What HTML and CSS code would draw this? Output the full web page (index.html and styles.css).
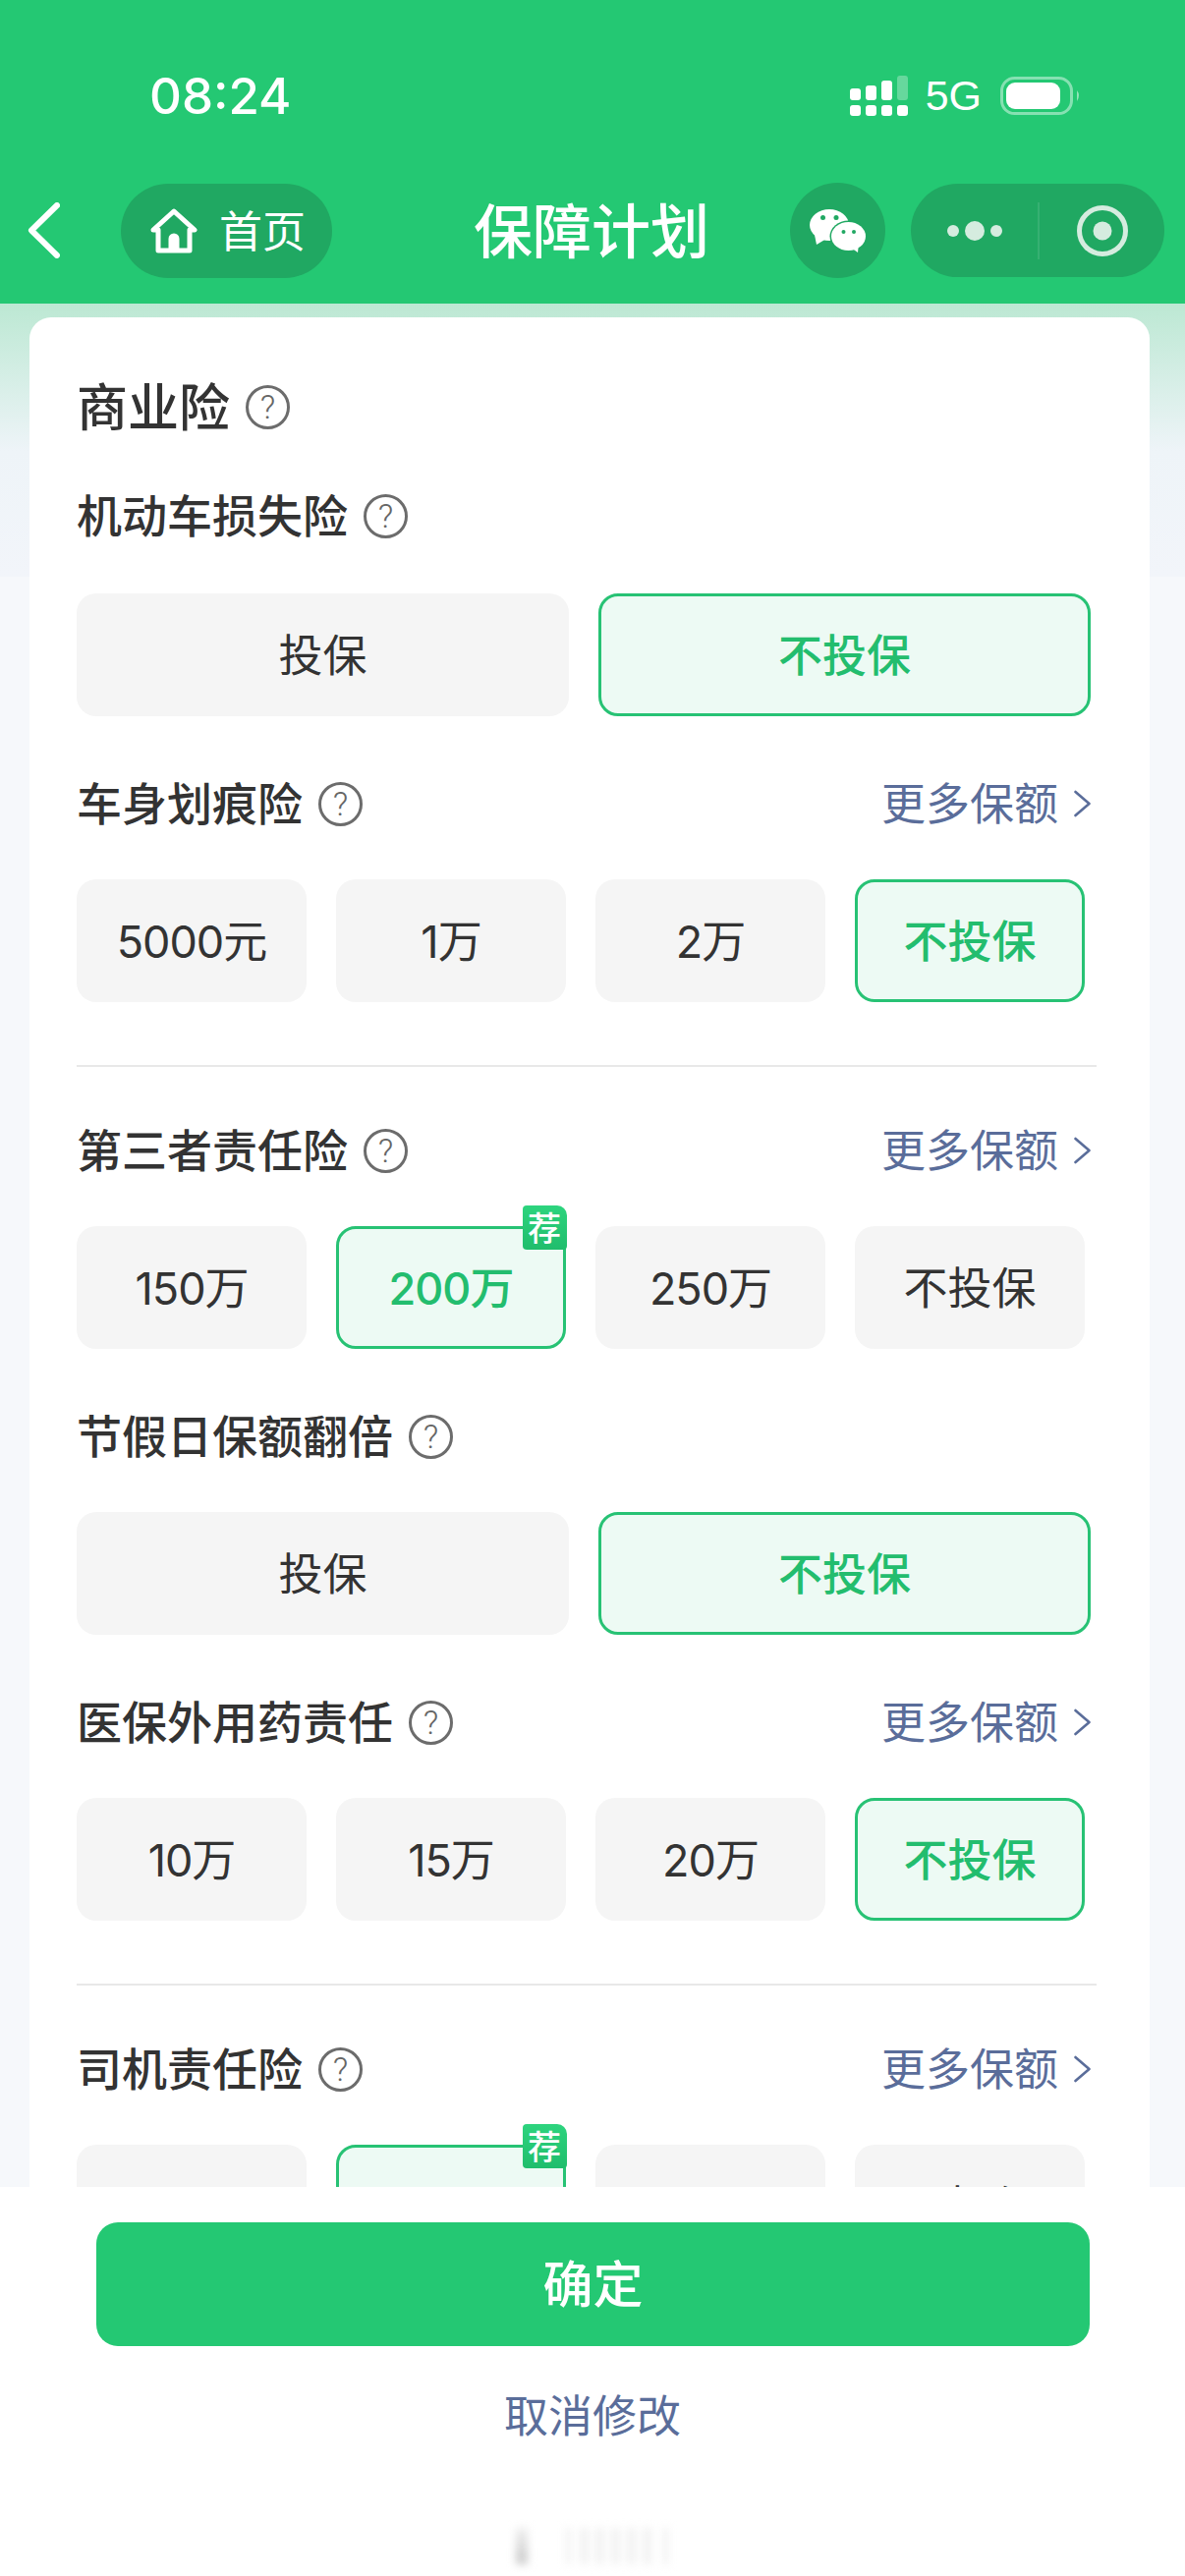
FILE: index.html
```html
<!DOCTYPE html>
<html lang="zh-CN">

<head>
    <meta charset="UTF-8">
    <meta name="viewport" content="width=device-width, initial-scale=1.0">
    <title>保障计划</title>
    <link rel="stylesheet" href="styles.css">
</head>

<body>
    <div class="page">
        <header class="header">
            <!-- Статус-бар -->
            <div class="status-bar">
                <span class="time">08:24</span>
                <div class="status-icons">
                    <svg class="signal" width="59" height="41" viewBox="0 0 59 41" fill="#fff">
                        <rect x="0" y="13" width="11" height="12" rx="3" />
                        <rect x="16" y="10" width="11" height="15" rx="3" />
                        <rect x="32" y="5" width="11" height="20" rx="3" />
                        <rect x="48" y="0" width="11" height="25" rx="3" opacity="0.3" />
                        <rect x="0" y="30" width="11" height="11" rx="3" />
                        <rect x="16" y="30" width="11" height="11" rx="3" />
                        <rect x="32" y="30" width="11" height="11" rx="3" />
                        <rect x="48" y="30" width="11" height="11" rx="3" />
                    </svg>
                    <span class="network">5G</span>
                    <svg class="battery" width="82" height="39" viewBox="0 0 82 39">
                        <rect x="1.5" y="1.5" width="71" height="36" rx="13" fill="none" stroke="#fff" stroke-opacity="0.45" stroke-width="3" />
                        <rect x="6" y="6" width="55" height="27" rx="9" fill="#fff" />
                        <path d="M78 14 q4 5 0 11z" fill="#fff" fill-opacity="0.5" />
                    </svg>
                </div>
            </div>
            <!-- Навигация -->
            <nav class="nav-bar">
                <svg class="back-icon" width="33" height="57" viewBox="0 0 33 57" fill="none" stroke="#fff" stroke-width="6" stroke-linecap="round" stroke-linejoin="round">
                    <path d="M30 3 L4 28.5 L30 54" />
                </svg>
                <div class="home-pill">
                    <svg width="48" height="46" viewBox="0 0 48 46" fill="none" stroke="#fff" stroke-width="5" stroke-linejoin="round">
                        <path d="M3 22 L24 3 L45 22 L40 22 L40 43 L8 43 L8 22 Z" />
                        <path d="M18.5 43 V31 a5.5 5.5 0 0 1 11 0 V43 Z" fill="#fff" stroke="none" />
                    </svg>
                    <span>首页</span>
                </div>
                <h1 class="nav-title">保障计划</h1>
                <div class="wechat-btn">
                    <svg width="58" height="46" viewBox="0 0 58 46">
                        <ellipse cx="20" cy="17" rx="20" ry="16" fill="#fff" />
                        <path d="M5 27 L7 37 L17 31 Z" fill="#fff" />
                        <circle cx="13.5" cy="9.5" r="2.5" fill="#20a862" />
                        <circle cx="27" cy="9.5" r="2.5" fill="#20a862" />
                        <ellipse cx="39.5" cy="28.5" rx="19" ry="16" fill="#20a862" />
                        <ellipse cx="39.5" cy="28.5" rx="17.5" ry="14.5" fill="#fff" />
                        <path d="M42 40 L49 45 L50 35 Z" fill="#fff" />
                        <circle cx="34.5" cy="24" r="2" fill="#20a862" />
                        <circle cx="45" cy="24" r="2" fill="#20a862" />
                    </svg>
                </div>
                <div class="capsule">
                    <div class="capsule-part">
                        <svg width="56" height="22" viewBox="0 0 56 22" fill="#d5ecdf">
                            <circle cx="6" cy="11" r="6" />
                            <circle cx="28" cy="11" r="10" />
                            <circle cx="50" cy="11" r="6" />
                        </svg>
                    </div>
                    <div class="capsule-part capsule-target">
                        <svg width="52" height="52" viewBox="0 0 52 52">
                            <circle cx="26" cy="26" r="23.5" fill="none" stroke="#d5ecdf" stroke-width="5" />
                            <circle cx="26" cy="26" r="9.5" fill="#d5ecdf" />
                        </svg>
                    </div>
                </div>
            </nav>
        </header>

        <main class="content">
            <div class="card">
                <div class="card-head">
                    <h2 class="card-title">商业险</h2>
                    <span class="help">?</span>
                </div>

                <section class="block">
                    <div class="block-head">
                        <h3>机动车损失险</h3><span class="help">?</span>
                    </div>
                    <div class="options two">
                        <div class="option">投保</div>
                        <div class="option active">不投保</div>
                    </div>
                </section>

                <section class="block">
                    <div class="block-head">
                        <h3>车身划痕险</h3><span class="help">?</span>
                        <a class="more">更多保额<svg width="17" height="28" viewBox="0 0 17 28" fill="none" stroke="#5a6d9a" stroke-width="2.6" stroke-linecap="round" stroke-linejoin="round"><path d="M1.5 2 L15.5 14 L1.5 26" /></svg></a>
                    </div>
                    <div class="options">
                        <div class="option num">5000元</div>
                        <div class="option num">1万</div>
                        <div class="option num">2万</div>
                        <div class="option active">不投保</div>
                    </div>
                </section>

                <hr class="divider">

                <section class="block">
                    <div class="block-head">
                        <h3>第三者责任险</h3><span class="help">?</span>
                        <a class="more">更多保额<svg width="17" height="28" viewBox="0 0 17 28" fill="none" stroke="#5a6d9a" stroke-width="2.6" stroke-linecap="round" stroke-linejoin="round"><path d="M1.5 2 L15.5 14 L1.5 26" /></svg></a>
                    </div>
                    <div class="options">
                        <div class="option num">150万</div>
                        <div class="option num active">200万<span class="tag">荐</span></div>
                        <div class="option num">250万</div>
                        <div class="option">不投保</div>
                    </div>
                </section>

                <section class="block">
                    <div class="block-head">
                        <h3>节假日保额翻倍</h3><span class="help">?</span>
                    </div>
                    <div class="options two">
                        <div class="option">投保</div>
                        <div class="option active">不投保</div>
                    </div>
                </section>

                <section class="block">
                    <div class="block-head">
                        <h3>医保外用药责任</h3><span class="help">?</span>
                        <a class="more">更多保额<svg width="17" height="28" viewBox="0 0 17 28" fill="none" stroke="#5a6d9a" stroke-width="2.6" stroke-linecap="round" stroke-linejoin="round"><path d="M1.5 2 L15.5 14 L1.5 26" /></svg></a>
                    </div>
                    <div class="options">
                        <div class="option num">10万</div>
                        <div class="option num">15万</div>
                        <div class="option num">20万</div>
                        <div class="option active">不投保</div>
                    </div>
                </section>

                <hr class="divider">

                <section class="block">
                    <div class="block-head">
                        <h3>司机责任险</h3><span class="help">?</span>
                        <a class="more">更多保额<svg width="17" height="28" viewBox="0 0 17 28" fill="none" stroke="#5a6d9a" stroke-width="2.6" stroke-linecap="round" stroke-linejoin="round"><path d="M1.5 2 L15.5 14 L1.5 26" /></svg></a>
                    </div>
                    <div class="options">
                        <div class="option"></div>
                        <div class="option active"><span class="tag">荐</span></div>
                        <div class="option"></div>
                        <div class="option">不投保</div>
                    </div>
                </section>
            </div>
        </main>

        <footer class="footer">
            <button class="confirm-btn">确定</button>
            <a class="cancel-link">取消修改</a>
            <div class="home-bar">
                <i></i><i></i><i></i><i></i><i></i><i></i><i></i><i></i>
            </div>
        </footer>
    </div>
</body>

</html>
```

FILE: styles.css
```css
* {
    box-sizing: border-box;
}

body {
    font-family: "Noto Sans CJK SC", Roboto, sans-serif;
    margin: 0;
    padding: 0;
    background-color: #fff;
    color: #333;
}

.page {
    display: flex;
    flex-direction: column;
    height: 100vh;
    overflow: hidden;
}

/* Шапка */
.header {
    height: 309px;
    flex-shrink: 0;
    background-color: #24c873;
    color: white;
}

.status-bar {
    height: 185px;
    display: flex;
    align-items: flex-start;
    justify-content: space-between;
    padding: 62px 106px 0 152px;
}

.time {
    font-family: Inter, sans-serif;
    font-size: 51px;
    font-weight: 500;
    line-height: 72px;
}

.status-icons {
    display: flex;
    align-items: center;
    height: 41px;
    margin-top: 15px;
}

.network {
    font-family: "Liberation Sans", sans-serif;
    font-size: 43px;
    line-height: 41px;
    margin: 0 19px 0 18px;
}

.nav-bar {
    height: 99px;
    display: flex;
    align-items: center;
    padding-left: 28px;
}

.back-icon {
    flex-shrink: 0;
}

.home-pill {
    width: 215px;
    height: 96px;
    margin-left: 62px;
    border-radius: 48px;
    background-color: #20a862;
    display: flex;
    align-items: center;
    padding-left: 30px;
    gap: 22px;
    font-size: 44px;
}

.home-pill span {
    padding-bottom: 4px;
}

.nav-title {
    margin: 0;
    width: 466px;
    padding: 0 0 6px 62px;
    text-align: center;
    font-size: 60px;
    font-weight: 500;
    white-space: nowrap;
}

.wechat-btn {
    width: 97px;
    height: 97px;
    border-radius: 50%;
    background-color: #20a862;
    display: flex;
    align-items: center;
    justify-content: center;
}

.capsule {
    width: 258px;
    height: 95px;
    margin-left: 26px;
    border-radius: 48px;
    background-color: #20a862;
    display: flex;
    align-items: center;
}

.capsule-part {
    width: 130px;
    height: 58px;
    display: flex;
    align-items: center;
    justify-content: center;
}

.capsule-target {
    border-left: 2px solid rgba(255, 255, 255, 0.1);
}

/* Контент */
.content {
    flex: 1;
    min-height: 0;
    overflow: hidden;
    padding: 14px 36px 0 30px;
    background: linear-gradient(#bce8d3, #eef4f8 150px, #f2f5fa 278px, #f6f8fb 278px);
}

.card {
    background-color: white;
    border-radius: 22px 22px 0 0;
    padding: 61px 60px 0 48px;
}

.card-head {
    display: flex;
    align-items: center;
    height: 60px;
    gap: 16px;
}

.card-title {
    margin: 0 0 6px;
    font-size: 52px;
    font-weight: 500;
}

.block {
    margin-top: 59px;
}

.card-head + .block {
    margin-top: 51px;
}

.card-head + .block .options {
    margin-top: 49px;
}

.block-head {
    display: flex;
    align-items: center;
    height: 60px;
    gap: 16px;
}

h3 {
    margin: 0 0 7px;
    font-size: 46px;
    font-weight: 500;
}

.help {
    width: 45px;
    height: 45px;
    flex-shrink: 0;
    border: 3px solid #6c6c6c;
    border-radius: 50%;
    color: #666;
    font-family: Roboto, sans-serif;
    font-size: 34px;
    font-weight: 300;
    line-height: 39px;
    text-align: center;
}

.more {
    margin-left: auto;
    display: flex;
    align-items: center;
    gap: 16px;
    color: #5a6d9a;
    font-size: 45px;
    line-height: 60px;
    padding-bottom: 5px;
}

.more svg {
    margin-top: 5px;
}

.options {
    display: grid;
    grid-template-columns: repeat(4, 234px);
    gap: 30px;
    margin-top: 47px;
}

.options.two {
    grid-template-columns: repeat(2, 501px);
}

.option {
    position: relative;
    height: 125px;
    padding-bottom: 5px;
    border-radius: 20px;
    background-color: #f5f5f5;
    display: flex;
    align-items: center;
    justify-content: center;
    font-family: Inter, "Noto Sans CJK SC", sans-serif;
    font-size: 45px;
}

.option.num {
    letter-spacing: -1px;
}

.option.active {
    background-color: #edfaf4;
    border: 3.5px solid #27c274;
    color: #23bd6e;
    font-weight: 500;
}

.tag {
    position: absolute;
    top: -24.5px;
    right: -3.5px;
    width: 45px;
    height: 45px;
    border-radius: 4px 10px 4px 4px;
    background: linear-gradient(#2dd47e, #20bd6c);
    color: white;
    font-family: "Noto Sans CJK SC", sans-serif;
    font-size: 34px;
    line-height: 44px;
    letter-spacing: 0;
    text-align: center;
}

.divider {
    border: none;
    border-top: 2px solid #e8e8e8;
    margin: 64px -6px 55px 0;
}

.divider + .block {
    margin-top: 0;
}

/* Низ страницы */
.footer {
    height: 396px;
    flex-shrink: 0;
    background-color: white;
    display: flex;
    flex-direction: column;
    align-items: center;
    padding-top: 36px;
}

.confirm-btn {
    width: 1011px;
    height: 126px;
    padding: 0 0 6px;
    border: none;
    border-radius: 22px;
    background-color: #24c873;
    color: white;
    font-family: "Noto Sans CJK SC", sans-serif;
    font-size: 51px;
    font-weight: 500;
    margin-left: 1px;
}

.cancel-link {
    margin-top: 37px;
    color: #5a6d9a;
    font-size: 45px;
    line-height: 64px;
}

.home-bar {
    margin-top: 84px;
    width: 156px;
    height: 37px;
    display: flex;
    filter: blur(4px);
}

.home-bar i {
    display: block;
    width: 7px;
    margin-left: 9px;
    background-color: #eeeeee;
}

.home-bar i:first-child {
    width: 12px;
    margin-left: 0;
    background: linear-gradient(#eeeeee, #c8c8c8);
}

.home-bar i:nth-child(2) {
    margin-left: 38px;
    background-color: #f4f4f4;
}

.home-bar i:last-child {
    margin-left: 12px;
    background-color: #f4f4f4;
}
```
